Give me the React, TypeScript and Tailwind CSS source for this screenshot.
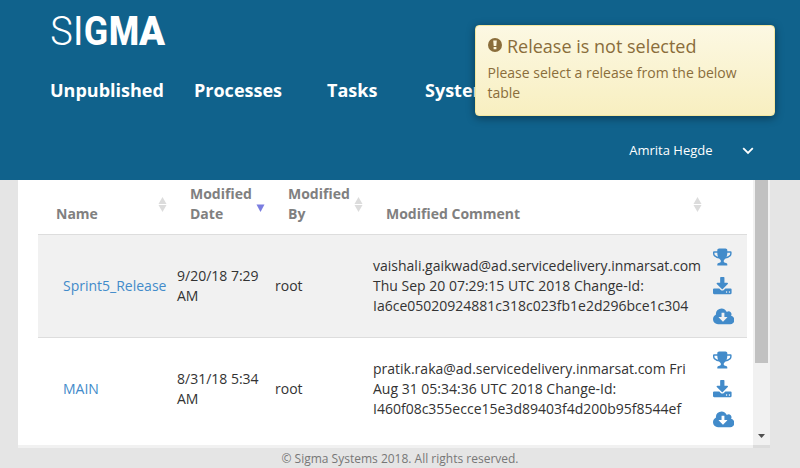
import React from "react";

const TROPHY =
  "M522 883q-74-162-74-371h-256v96q0 78 94.5 162t235.5 113zm1078-275v-96h-256q0 209-74 371 141-29 235.5-113t94.5-162zm128-128v128q0 71-41.5 143t-112 130-173 97.5-215.5 44.5q-42 54-95 95-38 34-52.5 72.5t-14.5 89.5q0 54 30.5 91t97.5 37q75 0 133.5 45.5t58.5 114.5v64q0 14-9 23t-23 9h-832q-14 0-23-9t-9-23v-64q0-69 58.5-114.5t133.5-45.5q67 0 97.5-37t30.5-91q0-51-14.5-89.5t-52.5-72.5q-53-41-95-95-113-5-215.5-44.5t-173-97.5-112-130-41.5-143v-128q0-40 28-68t68-28h288v-96q0-66 47-113t113-47h576q66 0 113 47t47 113v96h288q40 0 68 28t28 68z";
const DOWNLOAD =
  "M1344 1344q0-26-19-45t-45-19-45 19-19 45 19 45 45 19 45-19 19-45zm256 0q0-26-19-45t-45-19-45 19-19 45 19 45 45 19 45-19 19-45zm128-224v320q0 40-28 68t-68 28h-1472q-40 0-68-28t-28-68v-320q0-40 28-68t68-28h465l135 136q58 56 136 56t136-56l136-136h464q40 0 68 28t28 68zm-325-569q17 41-14 70l-448 448q-18 19-45 19t-45-19l-448-448q-31-29-14-70 17-39 59-39h256v-448q0-26 19-45t45-19h256q26 0 45 19t19 45v448h256q42 0 59 39z";
const CLOUD =
  "M1280 928q0-14-9-23t-23-9h-224v-352q0-13-9.5-22.5t-22.5-9.5h-192q-13 0-22.5 9.5t-9.5 22.5v352h-224q-13 0-22.5 9.5t-9.5 22.5q0 14 9 23l352 352q9 9 23 9t23-9l351-351q10-12 10-24zm640 224q0 159-112.5 271.5t-271.5 112.5h-1088q-185 0-316.5-131.5t-131.5-316.5q0-130 70-240t188-165q-2-30-2-43 0-212 150-362t362-150q156 0 285.5 87t188.5 231q71-62 166-62 106 0 181 75t75 181q0 76-41 138 130 31 213.5 135.5t83.5 238.5z";

function Logo() {
  return (
    <svg width="120" height="46" viewBox="0 0 120 46" className="block overflow-visible font-['Roboto',sans-serif]" fill="#fff" fontSize="40">
      <text x="0.3" y="38" fontWeight="300" textLength="22.5" lengthAdjust="spacingAndGlyphs">S</text>
      <text x="23" y="38" fontWeight="400" textLength="10.5" lengthAdjust="spacingAndGlyphs">I</text>
      <text x="33.7" y="38" fontWeight="700" textLength="24.5" lengthAdjust="spacingAndGlyphs">G</text>
      <text x="59" y="38" fontWeight="900" textLength="30" lengthAdjust="spacingAndGlyphs">M</text>
      <text x="89" y="38" fontWeight="900" textLength="26" lengthAdjust="spacingAndGlyphs">A</text>
    </svg>
  );
}

function Sort({ down }: { down?: boolean }) {
  return (
    <svg width="9" height="15" viewBox="0 0 9 15" className="mt-[17px] mr-[5px] block shrink-0">
      {!down && <path d="M4.5 0L8.5 7H.5z" fill="#dcdcdc" />}
      <path d={down ? "M.5 7.5h8L4.5 15z" : "M.5 8h8L4.5 15z"} fill={down ? "#7a7de0" : "#dcdcdc"} />
    </svg>
  );
}

function Head({ label, down }: { label: string; down?: boolean }) {
  return (
    <div className="flex justify-between pl-[18px]">
      <div className="self-end pb-[10px]">{label}</div>
      <Sort down={down} />
    </div>
  );
}

function Row({ name, date, comment, striped }: { name: string; date: string; comment: string; striped?: boolean }) {
  return (
    <div
      className={
        "grid h-[103px] grid-cols-[134px_98px_98px_340px_39px] items-center border-b text-[#333] " +
        (striped ? "border-[#ddd] bg-[#f1f1f1]" : "border-white bg-white")
      }
    >
      <a className="pl-[25px] text-[#428bca]">{name}</a>
      <div className="pl-[5px]">{date}</div>
      <div className="pl-[5px]">root</div>
      <div className="pl-[5px]">{comment}</div>
      <div className="flex h-full flex-col pl-[5px] pt-[11.6px] text-[#428bca]">
        <svg width="18.6" height="20" viewBox="64 0 1664 1792" fill="currentColor" className="block shrink-0"><path d={TROPHY} /></svg>
        <svg width="18.6" height="20" viewBox="64 0 1664 1792" fill="currentColor" className="mt-[10px] block shrink-0"><path d={DOWNLOAD} /></svg>
        <svg width="21.4" height="20" viewBox="0 0 1920 1792" fill="currentColor" className="mt-[10px] block shrink-0"><path d={CLOUD} /></svg>
      </div>
    </div>
  );
}

export default function App() {
  return (
    <div className="relative flex h-[468px] w-[800px] flex-col overflow-hidden bg-[#e5e5e5] font-['Open_Sans',sans-serif] text-[14px] leading-5">
      <header className="flex h-[180px] shrink-0 flex-col bg-[#10628c] text-white">
        <div className="pl-[50px] pt-[7px]"><Logo /></div>
        <nav className="mt-[25px] flex h-6 items-center pl-[50px] text-[18px] font-bold whitespace-nowrap">
          <a className="w-[144px]">Unpublished</a>
          <a className="w-[133px]">Processes</a>
          <a className="w-[98px]">Tasks</a>
          <a>Systems</a>
        </nav>
        <div className="mt-[38px] flex items-center justify-end pr-[46px] text-[13px]">
          <span>Amrita Hegde</span>
          <svg width="12" height="8" viewBox="0 0 12 8" className="ml-[29.5px] mt-[1px]" fill="none" stroke="#fff" strokeWidth="1.8"><path d="M1.2 1.2L6 6l4.8-4.8" /></svg>
        </div>
      </header>

      <main className="ml-[18px] flex h-[268px] w-[752px] shrink-0 flex-col">
        <div className="flex h-[265px]">
          <div className="w-[735px] overflow-hidden bg-white pl-5 pr-[6px]">
            <div className="grid h-[55px] grid-cols-[134px_98px_98px_339px_40px] border-b border-[#ddd] font-bold text-[#808080]">
              <Head label="Name" />
              <Head label="Modified Date" down />
              <Head label="Modified By" />
              <Head label="Modified Comment" />
            </div>
            <Row striped name="Sprint5_Release" date="9/20/18 7:29 AM" comment="vaishali.gaikwad@ad.servicedelivery.inmarsat.com Thu Sep 20 07:29:15 UTC 2018 Change-Id: Ia6ce05020924881c318c023fb1e2d296bce1c304" />
            <Row name="MAIN" date="8/31/18 5:34 AM" comment="pratik.raka@ad.servicedelivery.inmarsat.com Fri Aug 31 05:34:36 UTC 2018 Change-Id: I460f08c355ecce15e3d89403f4d200b95f8544ef" />
          </div>
          <div className="flex w-[17px] flex-col items-center justify-between bg-[#f1f1f1]">
            <div className="h-[183px] w-[13px] bg-[#c1c1c1]" />
            <svg width="7" height="4" viewBox="0 0 7 4" className="mb-[7px]"><path d="M0 0h7L3.5 4z" fill="#505050" /></svg>
          </div>
        </div>
        <div className="flex h-[3px]">
          <div className="w-[735px] bg-[#f1f1f1]" />
          <div className="w-[17px] bg-[#dcdcdc]" />
        </div>
      </main>
      <footer className="pt-[1px] text-center text-[12px] text-[#777]">© Sigma Systems 2018. All rights reserved.</footer>

      <div className="absolute left-[475px] top-[25px] h-[91px] w-[300px] rounded-[4px] border border-[#f5e79e] bg-linear-to-b from-[#fcf8e3] to-[#f8efc0] pl-[11.5px] pr-[11px] pt-[11px] text-[#8a6d3b] shadow-[0_2px_8px_rgba(0,0,0,0.4)]">
        <div className="flex h-5 items-center text-[18px]">
          <svg width="14" height="14" viewBox="0 0 14 14" className="mr-[5.5px] mb-[4px] shrink-0">
            <circle cx="7" cy="7" r="7" fill="#8a6d3b" />
            <path d="M5.2 2.5h3.6L8.3 8H5.7zM5.6 9h2.8v2.3H5.6z" fill="#fcf7df" />
          </svg>
          <span className="relative -top-px">Release is not selected</span>
        </div>
        <div className="mt-[6px]">Please select a release from the below table</div>
      </div>
    </div>
  );
}
